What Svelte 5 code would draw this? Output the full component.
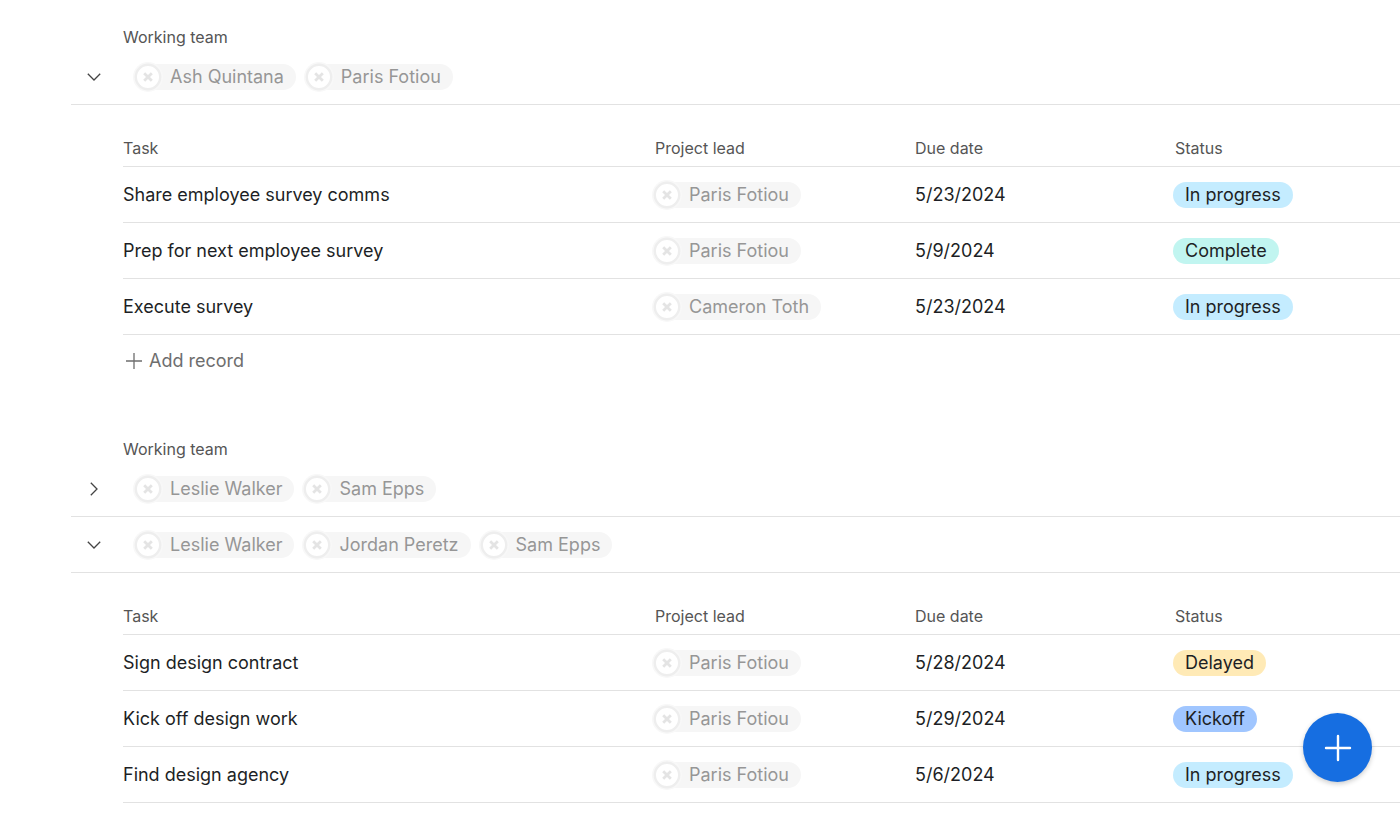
<script lang="ts">
	type Task = { name: string; lead: string; due: string; status: string };
	type Group = { id: number; team: string[]; open: boolean; tasks: Task[]; canAdd: boolean };

	let sections: Group[][] = $state([
		[
			{
				id: 1,
				team: ['Ash Quintana', 'Paris Fotiou'],
				open: true,
				canAdd: true,
				tasks: [
					{ name: 'Share employee survey comms', lead: 'Paris Fotiou', due: '5/23/2024', status: 'In progress' },
					{ name: 'Prep for next employee survey', lead: 'Paris Fotiou', due: '5/9/2024', status: 'Complete' },
					{ name: 'Execute survey', lead: 'Cameron Toth', due: '5/23/2024', status: 'In progress' }
				]
			}
		],
		[
			{ id: 2, team: ['Leslie Walker', 'Sam Epps'], open: false, canAdd: false, tasks: [] },
			{
				id: 3,
				team: ['Leslie Walker', 'Jordan Peretz', 'Sam Epps'],
				open: true,
				canAdd: false,
				tasks: [
					{ name: 'Sign design contract', lead: 'Paris Fotiou', due: '5/28/2024', status: 'Delayed' },
					{ name: 'Kick off design work', lead: 'Paris Fotiou', due: '5/29/2024', status: 'Kickoff' },
					{ name: 'Find design agency', lead: 'Paris Fotiou', due: '5/6/2024', status: 'In progress' }
				]
			}
		]
	]);

	function statusClass(status: string): string {
		return status.toLowerCase().replace(/ /g, '-');
	}
</script>

{#snippet person(name: string)}
	<span class="person">
		<svg class="avatar" viewBox="0 0 30 30" aria-hidden="true">
			<circle cx="15" cy="15" r="15" fill="#f8f8f8" />
			<circle cx="15" cy="15" r="12.2" fill="#fff" stroke="#eee" stroke-width="2.4" />
			<path d="M11.2 11.2l7.6 7.6M18.8 11.2l-7.6 7.6" stroke="#e4e4e4" stroke-width="2.8" />
		</svg>
		<span>{name}</span>
	</span>
{/snippet}

<main>
	{#each sections as groups}
		<section>
			<div class="section-label">Working team</div>
			{#each groups as group (group.id)}
				<div class="group-header">
					<button
						class="toggle"
						aria-label="Toggle group"
						aria-expanded={group.open}
						onclick={() => (group.open = !group.open)}
					>
						<svg class:closed={!group.open} viewBox="0 0 16 16" aria-hidden="true">
							<path d="M1.8 4.8L8 11l6.2-6.2" />
						</svg>
					</button>
					<div class="team">
						{#each group.team as name}
							{@render person(name)}
						{/each}
					</div>
				</div>

				{#if group.open}
					<div class="group-body">
						<table>
							<thead>
								<tr>
									<th class="task">Task</th>
									<th class="lead">Project lead</th>
									<th class="due">Due date</th>
									<th class="status">Status</th>
								</tr>
							</thead>
							<tbody>
								{#each group.tasks as task}
									<tr>
										<td>{task.name}</td>
										<td><div class="cell">{@render person(task.lead)}</div></td>
										<td>{task.due}</td>
										<td>
											<div class="cell">
												<span class="pill {statusClass(task.status)}">{task.status}</span>
											</div>
										</td>
									</tr>
								{/each}
							</tbody>
						</table>
						{#if group.canAdd}
							<button class="add-record">
								<svg viewBox="0 0 18 18" aria-hidden="true">
									<path d="M9 1v16M1 9h16" />
								</svg>
								Add record
							</button>
						{/if}
					</div>
				{/if}
			{/each}
		</section>
	{/each}
</main>

<button class="fab" aria-label="Add">
	<svg viewBox="0 0 28 28" aria-hidden="true">
		<path d="M14 2v24M2 14h24" />
	</svg>
</button>

<style>
	:global(body) {
		margin: 0;
		background: #fff;
	}

	main {
		display: flex;
		flex-direction: column;
		gap: 51px;
		padding: 25px 0 0 71px;
		font-family: Inter, 'Liberation Sans', sans-serif;
		font-size: 18px;
		line-height: 24px;
		color: #1d1f25;
	}

	button {
		padding: 0;
		border: 0;
		background: none;
		font: inherit;
		cursor: pointer;
	}

	.section-label {
		padding-left: 52px;
		font-size: 16px;
		color: #555;
	}

	.group-header {
		display: flex;
		align-items: center;
		gap: 32px;
		height: 56px;
		box-sizing: border-box;
		padding-left: 15px;
		border-bottom: 1px solid #e2e2e2;
	}

	.toggle {
		display: flex;
		width: 16px;
		height: 16px;
	}

	.toggle svg {
		width: 16px;
		height: 16px;
		fill: none;
		stroke: #444;
		stroke-width: 1.3;
	}

	.toggle svg.closed {
		transform: rotate(-90deg);
	}

	.team {
		display: flex;
		gap: 9px;
	}

	.person {
		display: inline-flex;
		align-items: center;
		gap: 7px;
		height: 26px;
		padding-right: 12px;
		border-radius: 13px;
		background: #f6f6f6;
		color: #969696;
		white-space: nowrap;
	}

	.avatar {
		flex-shrink: 0;
		width: 30px;
		height: 30px;
		margin-left: -1px;
	}

	.group-body {
		padding: 31px 0 0 52px;
	}

	table {
		width: 100%;
		border-collapse: separate;
		border-spacing: 0;
		table-layout: fixed;
	}

	th {
		height: 24px;
		padding: 0 0 6px;
		border-bottom: 1px solid #e2e2e2;
		font-size: 16px;
		font-weight: 400;
		text-align: left;
		color: #555;
	}

	.lead,
	.due {
		width: 260px;
	}

	.status {
		width: 225px;
	}

	td {
		height: 55px;
		padding: 0;
		border-bottom: 1px solid #e2e2e2;
	}

	.cell {
		display: flex;
		margin-left: -2px;
	}

	.pill {
		height: 26px;
		padding: 0 12px;
		border-radius: 13px;
		line-height: 26px;
	}

	.in-progress {
		background: #c4ecff;
	}

	.complete {
		background: #c1f5f0;
	}

	.delayed {
		background: #ffeab6;
	}

	.kickoff {
		background: #a0c6ff;
	}

	.add-record {
		display: flex;
		align-items: center;
		gap: 6px;
		height: 51px;
		padding-left: 2px;
		color: #6e6e6e;
	}

	.add-record svg {
		width: 18px;
		height: 18px;
		stroke: #6e6e6e;
		stroke-width: 1.3;
	}

	.fab {
		position: fixed;
		right: 28px;
		bottom: 32px;
		display: flex;
		align-items: center;
		justify-content: center;
		width: 69px;
		height: 69px;
		border-radius: 50%;
		background: #166ee1;
		box-shadow: 0 2px 5px rgba(0, 0, 0, 0.2);
	}

	.fab svg {
		width: 28px;
		height: 28px;
		stroke: #fff;
		stroke-width: 2.4;
		stroke-linecap: round;
	}
</style>
